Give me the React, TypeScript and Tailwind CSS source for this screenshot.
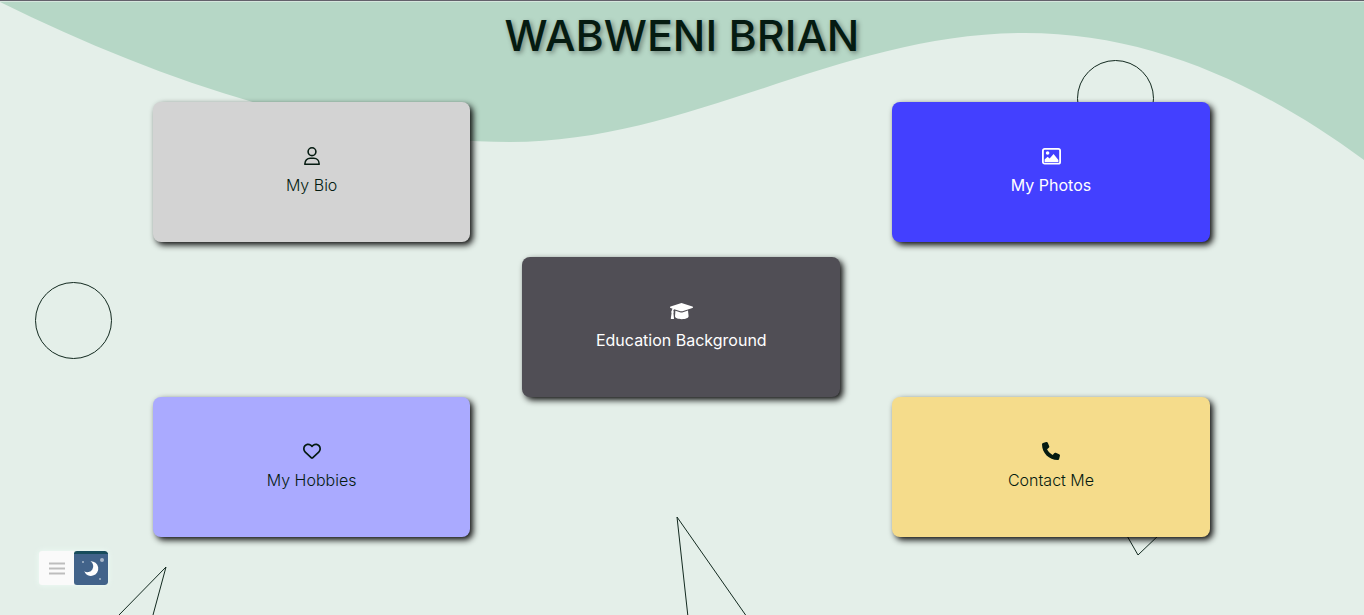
import type { ReactNode } from "react";
import { FaPhone, FaRegHeart } from "react-icons/fa6";

function PersonIcon() {
  return (
    <svg width="16" height="18" viewBox="0 0 16 18" fill="none" stroke="currentColor" strokeWidth="1.6" aria-hidden="true">
      <circle cx="8" cy="4.7" r="3.9" />
      <path d="M0.8 17.2C0.8 13.2 3.4 11.3 6.2 11.3H9.8C12.6 11.3 15.2 13.2 15.2 17.2Z" strokeLinejoin="round" />
    </svg>
  );
}

function PictureIcon() {
  return (
    <svg width="19" height="18" viewBox="0 0 19 18" fill="currentColor" aria-hidden="true">
      <rect x="0.9" y="1.9" width="17.2" height="14.8" rx="1.8" fill="none" stroke="currentColor" strokeWidth="1.8" />
      <circle cx="5.6" cy="6" r="1.8" />
      <path d="M2.6 15V12.6L5.6 9.8L7.6 11.6L11.6 6.9L16.4 13V15Z" />
    </svg>
  );
}

function GraduationIcon() {
  return (
    <svg width="23" height="18" viewBox="0 0 23 18" fill="currentColor" aria-hidden="true">
      <path d="M11.5 1L22.4 4.5C23.2 4.8 23.2 5.7 22.4 6L12.5 9.2C11.8 9.4 11.2 9.4 10.5 9.2L4.2 7.2C3.6 7.6 3.3 8.2 3.3 9.1C4 9.6 4 10.3 3.4 10.8L4 16.4C4 16.8 3.8 17 3.4 17H1.3C0.9 17 0.7 16.8 0.8 16.4L1.6 10.8C1 10.3 1 9.6 1.7 9.1C1.7 8.1 2 7.3 2.6 6.7L0.6 6C-0.2 5.7 -0.2 4.8 0.6 4.5Z" />
      <path d="M5.4 8.7L10 10.2C11 10.5 12 10.5 13 10.2L18 8.6L18.6 14.3C18.6 16 15.4 17.2 11.8 17.2C8 17.2 5 16 5 14.3Z" />
    </svg>
  );
}

type Card = {
  label: string;
  href: string;
  icon: ReactNode;
  className: string;
};

const cards: Card[] = [
  {
    label: "My Bio",
    href: "#bio",
    icon: <PersonIcon />,
    className: "col-start-1 row-start-1 bg-[#d3d3d3] font-light text-[#051b11]",
  },
  {
    label: "My Photos",
    href: "#photos",
    icon: <PictureIcon />,
    className: "col-start-3 row-start-1 bg-[#4340ff] font-normal text-white",
  },
  {
    label: "Education Background",
    href: "#education",
    icon: <GraduationIcon />,
    className: "col-start-2 row-start-2 bg-[#504e55] font-normal text-white",
  },
  {
    label: "My Hobbies",
    href: "#hobbies",
    icon: <FaRegHeart className="size-[18px]" />,
    className: "col-start-1 row-start-3 bg-[#aaaaff] font-light text-[#051b11]",
  },
  {
    label: "Contact Me",
    href: "#contact",
    icon: <FaPhone className="size-[18px]" />,
    className: "col-start-3 row-start-3 bg-[#f5dc8b] font-light text-[#051b11]",
  },
];

function Backdrop() {
  return (
    <svg
      className="absolute inset-0 -z-10 h-full w-full"
      viewBox="0 1 1364 614"
      preserveAspectRatio="none"
      aria-hidden="true"
    >
      <path
        d="M0 0V2C168 85 345 142 510 142C690 142 840 33 1025 33C1150 33 1262 85 1364 160V0Z"
        fill="#b6d7c6"
      />
      <path d="M0 1.5H1364" stroke="#d5e6dd" strokeWidth="1" />
      <g fill="none" stroke="#12291f" strokeWidth="1">
        <circle cx="73.5" cy="320.5" r="38" />
        <circle cx="1115.5" cy="98.5" r="38" />
        <path d="M119 615L166 567L153 615" />
        <path d="M688 617L677 517L747 617" />
        <path d="M1126 534L1138 555L1161 533" />
      </g>
    </svg>
  );
}

function ThemeToggle() {
  return (
    <div className="absolute bottom-[30px] left-[39px] flex overflow-hidden rounded-[3px] shadow-[0_0_6px_rgba(240,255,248,0.9)]">
      <button type="button" aria-label="Menu" className="grid h-[34px] w-[35px] place-items-center bg-[#fafafa]">
        <svg width="16" height="13" viewBox="0 0 16 13" stroke="#bdbdbd" strokeWidth="2" aria-hidden="true">
          <path d="M0 1.5H16M0 6.5H16M0 11.5H16" />
        </svg>
      </button>
      <button
        type="button"
        aria-label="Dark mode"
        className="h-[34px] w-[34px] overflow-hidden rounded-[3px] border-t-[3px] border-[#184c5c] bg-[#42638a]"
      >
        <svg width="34" height="31" viewBox="0 0 34 31" aria-hidden="true">
          <path d="M16.5 7.3A7.3 7.3 0 1 1 10.2 17.3A5.6 5.6 0 1 0 16.5 7.3Z" fill="#fff" />
          <circle cx="28" cy="6" r="2" fill="#a9b8ca" />
          <circle cx="9" cy="8" r="1" fill="#a9b8ca" />
          <circle cx="26" cy="25" r="1" fill="#a9b8ca" />
        </svg>
      </button>
    </div>
  );
}

export default function App() {
  return (
    <div className="relative isolate min-h-screen overflow-hidden border-t border-[#63616b] bg-[#e4efe9] font-['Inter','Open_Sans',sans-serif] text-[#051b11]">
      <Backdrop />
      <header className="px-4 pb-[33px] text-center">
        <h1 className="text-[43px] leading-[68px] font-medium [text-shadow:2px_2px_5px_rgba(0,0,0,0.4)]">
          WABWENI BRIAN
        </h1>
      </header>
      <main className="ml-[11.2%] grid w-[77.5%] grid-cols-3 grid-rows-[155px_140px_140px] items-start gap-x-[52px]">
        {cards.map((card) => (
          <a
            key={card.label}
            href={card.href}
            className={`flex h-[140px] flex-col items-center justify-center gap-2 rounded-lg text-base leading-6 shadow-[3px_3px_6px_rgba(0,0,0,0.95)] ${card.className}`}
          >
            {card.icon}
            <span>{card.label}</span>
          </a>
        ))}
      </main>
      <ThemeToggle />
    </div>
  );
}
